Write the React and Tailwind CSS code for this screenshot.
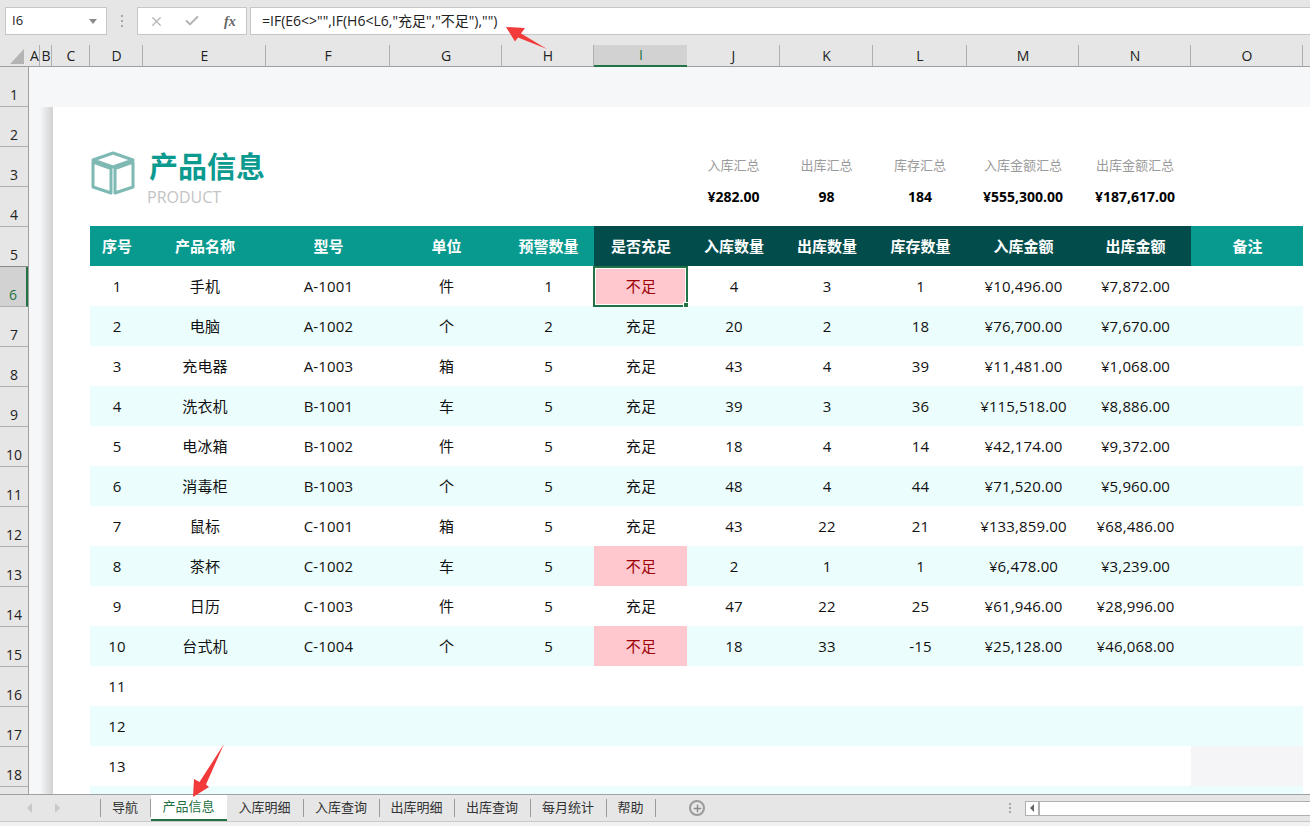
import { X, Check, Plus } from "lucide-react";

const columns = ["A", "B", "C", "D", "E", "F", "G", "H", "I", "J", "K", "L", "M", "N", "O"];
const headers = ["序号", "产品名称", "型号", "单位", "预警数量", "是否充足", "入库数量", "出库数量", "库存数量", "入库金额", "出库金额", "备注"];
const summary = [
  ["入库汇总", "¥282.00"],
  ["出库汇总", "98"],
  ["库存汇总", "184"],
  ["入库金额汇总", "¥555,300.00"],
  ["出库金额汇总", "¥187,617.00"],
];
const rows = [
  [1, "手机", "A-1001", "件", 1, "不足", 4, 3, 1, "¥10,496.00", "¥7,872.00"],
  [2, "电脑", "A-1002", "个", 2, "充足", 20, 2, 18, "¥76,700.00", "¥7,670.00"],
  [3, "充电器", "A-1003", "箱", 5, "充足", 43, 4, 39, "¥11,481.00", "¥1,068.00"],
  [4, "洗衣机", "B-1001", "车", 5, "充足", 39, 3, 36, "¥115,518.00", "¥8,886.00"],
  [5, "电冰箱", "B-1002", "件", 5, "充足", 18, 4, 14, "¥42,174.00", "¥9,372.00"],
  [6, "消毒柜", "B-1003", "个", 5, "充足", 48, 4, 44, "¥71,520.00", "¥5,960.00"],
  [7, "鼠标", "C-1001", "箱", 5, "充足", 43, 22, 21, "¥133,859.00", "¥68,486.00"],
  [8, "茶杯", "C-1002", "车", 5, "不足", 2, 1, 1, "¥6,478.00", "¥3,239.00"],
  [9, "日历", "C-1003", "件", 5, "充足", 47, 22, 25, "¥61,946.00", "¥28,996.00"],
  [10, "台式机", "C-1004", "个", 5, "不足", 18, 33, -15, "¥25,128.00", "¥46,068.00"],
  [11],
  [12],
  [13],
  [],
];
const tabs = [
  ["导航", "w-[50px]"],
  ["产品信息", "w-[76px]"],
  ["入库明细", "w-[77px]"],
  ["入库查询", "w-[76px]"],
  ["出库明细", "w-[75px]"],
  ["出库查询", "w-[76px]"],
  ["每月统计", "w-[76px]"],
  ["帮助", "w-[49px]"],
];

const FormulaBar = () => (
  <div className="flex h-[45px] shrink-0 items-start bg-[#e6e6e6] pl-[5px] pt-[7px]">
    <div className="flex h-[28px] w-[102px] items-center justify-between border border-[#c6c6c6] bg-white pl-[6px] pr-[9px] text-[13px] text-[#222]">
      I6
      <span className="h-0 w-0 border-x-[4px] border-t-[5px] border-x-transparent border-t-[#8a8a8a]" />
    </div>
    <div className="flex h-[28px] w-[30px] flex-col items-center justify-center gap-[3px]">
      <span className="h-[2px] w-[2px] bg-[#a8a8a8]" />
      <span className="h-[2px] w-[2px] bg-[#a8a8a8]" />
      <span className="h-[2px] w-[2px] bg-[#a8a8a8]" />
    </div>
    <div className="flex h-[28px] w-[110px] items-center border border-[#c6c6c6] bg-white pl-[11px] text-[#b4b4b4]">
      <X size={15} strokeWidth={2} />
      <Check size={16} strokeWidth={3} className="ml-[20px]" />
      <span className="ml-[24px] font-['Liberation_Serif',serif] text-[14px] font-bold italic text-[#666]">fx</span>
    </div>
    <div className="ml-[3px] flex h-[28px] flex-1 items-center border-y border-l border-[#c6c6c6] bg-white pb-px pl-[11px] text-[14px] text-[#222]">
      =IF(E6&lt;&gt;"",IF(H6&lt;L6,"充足","不足"),"")
    </div>
  </div>
);

const ColumnHeaders = () => (
  <div className="grid h-[22px] shrink-0 grid-cols-[29px_11px_12px_38px_53px_123px_124px_112px_92px_93px_93px_93px_94px_112px_112px_112px] grid-rows-[21px] border-b border-[#a0a0a0] bg-[#e6e6e6] text-[14px] leading-none text-[#222]">
    <div className="flex items-end justify-end pb-[2px] pr-[5px]">
      <svg width="14" height="15" viewBox="0 0 14 15">
        <path d="M14 0V15H0Z" fill="#b4b4b4" />
      </svg>
    </div>
    {columns.map((col) => (
      <div
        key={col}
        className={
          col === "I"
            ? "relative z-10 -mb-px flex items-center justify-center border-b-2 border-[#217346] bg-[#d2d2d2] pl-px text-[#1f7145]"
            : "flex items-center justify-center border-r border-[#b0b0b0] pl-px"
        }
      >
        {col}
      </div>
    ))}
  </div>
);

const RowHeaders = () => (
  <div className="w-[29px] shrink-0 overflow-hidden border-r border-[#a0a0a0] bg-[#e6e6e6] text-[14px] text-[#222]">
    {Array.from({ length: 18 }, (_, i) => i + 1).map((n) => (
      <div
        key={n}
        className={
          n === 6
            ? "flex h-10 items-end justify-center border-b border-[#b0b0b0] border-r-2 border-r-[#217346] bg-[#d2d2d2] pb-px text-[#1f7145]"
            : n === 5
              ? "flex h-10 items-end justify-center border-b border-[#8a8a8a] pb-px"
              : "flex h-10 items-end justify-center border-b border-[#b0b0b0] pb-px"
        }
      >
        {n}
      </div>
    ))}
  </div>
);

const Gutter = () => (
  <div className="w-[24px] shrink-0 bg-gradient-to-r from-[#f6f7f9] from-45% to-[#d2d2d2]" />
);

const CubeIcon = () => (
  <svg width="46" height="44" viewBox="0 0 46 44" fill="none" stroke="#7fb9b3" strokeWidth="3" strokeLinejoin="round">
    <path d="M23 2 L43 9 L23 16 L3 9 Z" />
    <path d="M3 11 L21 17.5 V42 L3 36 Z" />
    <path d="M43 11 L25 17.5 V42 L43 36 Z" />
  </svg>
);

const TitleBlock = () => (
  <div className="grid h-[119px] grid-cols-[597px_93px_93px_94px_112px_112px]">
    <div className="flex items-start pt-[44px]">
      <CubeIcon />
      <div className="ml-[13px]">
        <div className="mt-[-3px] text-[29px] font-bold leading-[38px] text-[#0a9a8f]">产品信息</div>
        <div className="ml-[-2px] mt-px text-[16px] leading-[20px] text-[#c4c4c4]">PRODUCT</div>
      </div>
    </div>
    {summary.map(([label, value]) => (
      <div key={label} className="flex flex-col items-center whitespace-nowrap pt-[48px]">
        <div className="text-[13px] leading-[20px] text-[#9a9a9a]">{label}</div>
        <div className="mt-[12px] text-[14px] font-bold leading-[20px] text-black">{value}</div>
      </div>
    ))}
  </div>
);

const TableHead = () => (
  <div className="grid h-10 grid-cols-[53px_123px_124px_112px_92px_93px_93px_93px_94px_112px_112px_112px] text-[15px] font-bold text-white">
    {headers.map((h, i) => (
      <div
        key={h}
        className={
          i >= 5 && i <= 10
            ? "flex items-center justify-center bg-[#034c4c] pl-px"
            : "flex items-center justify-center bg-[#099a8f] pl-px"
        }
      >
        {h}
      </div>
    ))}
  </div>
);

const TableRow = ({ row, index }) => {
  const bg = index % 2 === 1 ? "bg-[#ebfefd]" : "bg-white";
  return (
    <div className={`grid h-10 w-[1213px] shrink-0 grid-cols-[53px_123px_124px_112px_92px_93px_93px_93px_94px_112px_112px_112px] text-[15px] tracking-[0.15px] text-[#111] ${bg}`}>
      {Array.from({ length: 12 }, (_, i) => {
        const value = row[i];
        const isShort = value === "不足";
        const isActive = index === 0 && i === 5;
        const isBlankGray = index === 12 && i === 11;
        return (
          <div
            key={i}
            className={
              isActive
                ? "relative z-10 -mx-px -mb-px flex h-[41px] items-center justify-center border-2 border-[#217346] bg-[#ffc7ce] pl-px text-[#9c0006] outline outline-1 -outline-offset-3 outline-white"
                : isShort
                  ? "flex items-center justify-center bg-[#ffc7ce] pl-px text-[#9c0006]"
                  : isBlankGray
                    ? "bg-[#f5f5f7]"
                    : "flex items-center justify-center pl-px"
            }
          >
            {value}
            {isActive && (
              <span className="absolute -bottom-[3px] -right-[3px] h-[6px] w-[6px] border border-white bg-[#217346]" />
            )}
          </div>
        );
      })}
    </div>
  );
};

const TabBar = () => (
  <div className="flex h-[28px] shrink-0 items-stretch border-y border-t-[#a0a0a0] border-b-[#c8c8c8] bg-[#e6e6e6] text-[13px] text-[#333]">
    <div className="flex w-[100px] items-center gap-[23px] pl-[27px]">
      <span className="h-0 w-0 border-y-[5px] border-r-[5px] border-y-transparent border-r-[#c8c8c8]" />
      <span className="h-0 w-0 border-y-[5px] border-l-[5px] border-y-transparent border-l-[#c8c8c8]" />
    </div>
    <div className="my-[4px] border-l border-[#9a9a9a]" />
    {tabs.map(([name, w]) =>
      name === "产品信息" ? (
        <div key={name} className={`flex ${w} items-center justify-center border-b-2 border-[#217346] bg-white pr-px text-[#1f7145]`}>
          {name}
        </div>
      ) : (
        <div key={name} className={`my-[4px] flex ${w} items-center justify-center border-r border-[#9a9a9a] pr-px`}>
          {name}
        </div>
      )
    )}
    <div className="ml-[33px] flex items-center">
      <span className="flex h-[16px] w-[16px] items-center justify-center rounded-full border-2 border-[#9a9a9a] text-[#8a8a8a]">
        <Plus size={11} strokeWidth={3} />
      </span>
    </div>
    <div className="ml-auto flex w-[301px] items-center">
      <div className="flex flex-col gap-[2px]">
        <span className="h-[2px] w-[2px] bg-[#a8a8a8]" />
        <span className="h-[2px] w-[2px] bg-[#a8a8a8]" />
        <span className="h-[2px] w-[2px] bg-[#a8a8a8]" />
      </div>
      <div className="ml-[14px] flex h-[15px] flex-1 items-stretch border border-r-0 border-[#b0b0b0] bg-white">
        <div className="flex w-[14px] items-center justify-center border-r-2 border-[#b0b0b0]">
          <span className="h-0 w-0 border-y-[4px] border-r-[4px] border-y-transparent border-r-[#666]" />
        </div>
      </div>
    </div>
  </div>
);

// Red callout arrows pasted on top of the screenshot
const Arrows = () => (
  <>
    <svg className="absolute left-[500px] top-[20px]" width="52" height="34" viewBox="500 20 52 34">
      <path d="M506 27 L525 28 L521 33.5 L547 49 L518 37.5 L515 41.5 Z" fill="#f23a3a" />
    </svg>
    <svg className="absolute left-[188px] top-[740px]" width="40" height="60" viewBox="188 740 40 60">
      <path d="M193 797 L194 779 L199.5 782 L224 744 L206 784.5 L209 787 Z" fill="#f23a3a" />
    </svg>
  </>
);

export default function App() {
  return (
    <div className="relative flex h-[826px] w-[1310px] flex-col overflow-hidden bg-[#f1f1f1] font-['Open_Sans','Noto_Sans_CJK_SC',sans-serif]">
      <FormulaBar />
      <ColumnHeaders />
      <div className="flex min-h-0 flex-1 overflow-hidden">
        <RowHeaders />
        <div className="flex min-w-0 flex-1 flex-col">
          <div className="h-[199px] shrink-0 border-b border-[#8a8a8a]">
            <div className="h-10 bg-[#f6f7f9]" />
            <div className="flex h-[159px]">
              <Gutter />
              <div className="flex-1 bg-white pl-[37px]">
                <TitleBlock />
                <TableHead />
              </div>
            </div>
          </div>
          <div className="flex min-h-0 flex-1">
            <Gutter />
            <div className="flex min-h-0 flex-1 flex-col overflow-hidden bg-white pl-[37px]">
              {rows.map((row, index) => (
                <TableRow key={index} row={row} index={index} />
              ))}
            </div>
          </div>
        </div>
      </div>
      <TabBar />
      <div className="h-[4px] shrink-0 bg-[#f1f1f1]" />
      <Arrows />
    </div>
  );
}
